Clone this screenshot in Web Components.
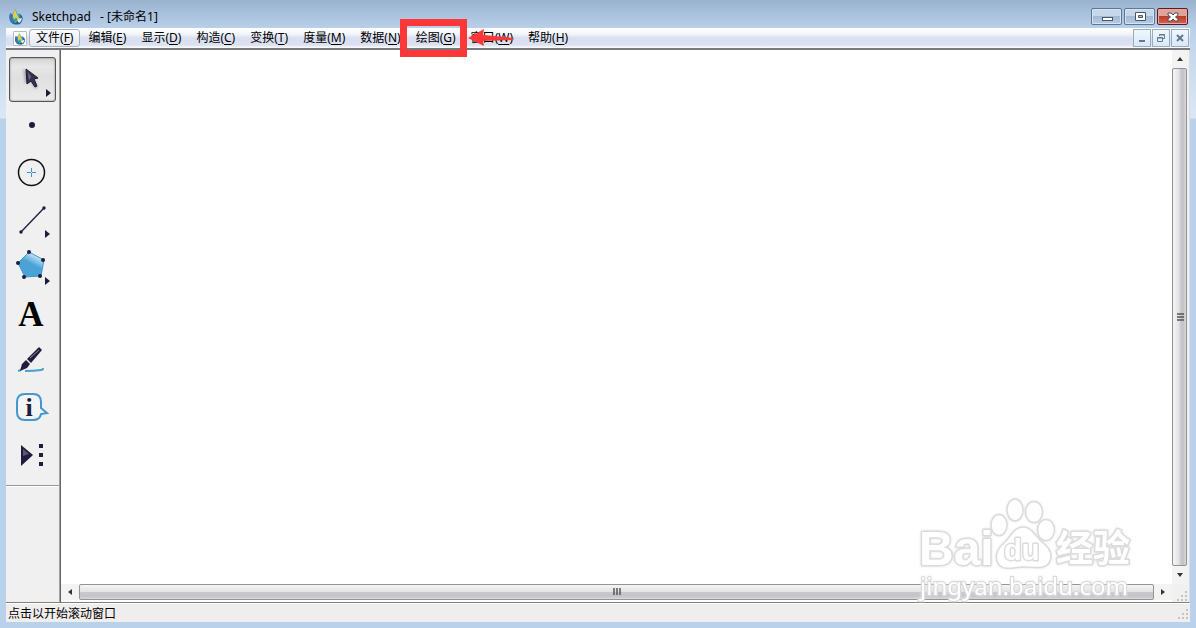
<!DOCTYPE html>
<html lang="zh-CN">
<head>
<meta charset="utf-8">
<title>Sketchpad - [未命名1]</title>
<style>
  html, body { margin: 0; height: 100%; overflow: hidden; }
  body { font: 12px/16px "Noto Sans", "Noto Sans CJK SC", sans-serif; color: #000; }
</style>
</head>
<body>
<app-window>
  <title-bar slot="title">Sketchpad&nbsp;&nbsp; - [未命名1]</title-bar>
  <menu-bar slot="menu">
    <menu-item key="F" hot>文件</menu-item>
    <menu-item key="E">编辑</menu-item>
    <menu-item key="D">显示</menu-item>
    <menu-item key="C">构造</menu-item>
    <menu-item key="T">变换</menu-item>
    <menu-item key="M">度量</menu-item>
    <menu-item key="N">数据</menu-item>
    <menu-item key="G" marked>绘图</menu-item>
    <menu-item key="W">窗口</menu-item>
    <menu-item key="H">帮助</menu-item>
  </menu-bar>
  <tool-palette slot="tools"></tool-palette>
  <sketch-view slot="view"></sketch-view>
  <status-bar slot="status">点击以开始滚动窗口</status-bar>
</app-window>

<script>
const define = (name, html, setup) => {
  const template = document.createElement('template');
  template.innerHTML = html;
  customElements.define(name, class extends HTMLElement {
    constructor() {
      super();
      this.attachShadow({ mode: 'open' }).append(template.content.cloneNode(true));
    }
    connectedCallback() { if (setup) setup(this, this.shadowRoot); }
  });
};

const drop = (id) => `
  <svg viewBox="0 0 16 16" aria-hidden="true">
    <defs><radialGradient id="${id}" cx=".4" cy=".4"><stop offset="0" stop-color="#8fe0f5"/><stop offset=".6" stop-color="#2d9fc9"/><stop offset="1" stop-color="#285f8e"/></radialGradient></defs>
    <path d="M2 5Q0 12 5 15Q9 16 12 15Q16 11 14 7Q12 4 10 5L7 0Q6 5 2 5Z" fill="url(#${id})"/>
    <path d="M7 0L9 6L12 10L10 11L8 8L6 10L5 7Z" fill="#f2cc32"/>
    <path d="M2 4Q0 10 4 14L6 15Q4 9 5 6Z" fill="#3f73a6"/>
    <path d="M9 11Q12 9 14 9Q14 12 11 14Z" fill="#d6f0ec"/>
    <path d="M6 13L9 11L8 14Z" fill="#79b84b"/>
  </svg>`;

define('app-window', `
  <style>
    :host { display: grid; grid-template: 28px 22px minmax(0, 1fr) 19px / auto minmax(0, 1fr);
      box-sizing: border-box; height: 100vh; padding: 0 6px 6px;
      background: linear-gradient(#99b2cf, #b9d0e9 28px, #c4d8ed 48px, #dbe7f5 118px, #b9d1ea 119px); }
    .title, .menu, .status { grid-column: 1 / -1; display: grid; }
    .tools, .view { display: grid; min-width: 0; min-height: 0; }
  </style>
  <div class="title"><slot name="title"></slot></div>
  <div class="menu"><slot name="menu"></slot></div>
  <div class="tools"><slot name="tools"></slot></div>
  <div class="view"><slot name="view"></slot></div>
  <div class="status"><slot name="status"></slot></div>`);

define('title-bar', `
  <style>
    :host { display: flex; align-items: center; padding: 5px 2px 0; min-width: 0; }
    svg { width: 16px; height: 16px; }
    .name { flex: 1; padding-left: 8px; white-space: nowrap; }
    .controls { display: flex; gap: 2px; }
    button { width: 31px; height: 17px; padding: 0; border: 1px solid #5c7898; border-radius: 2px; display: grid; place-items: center;
      background: linear-gradient(#c6d7e9 45%, #a2bad4 50%, #b6cce4); box-shadow: inset 0 0 0 1px #d5e3f2; }
    button svg { width: 14px; height: 12px; }
    .close { border-color: #5b1a26; background: linear-gradient(#e0a398 45%, #bd3a27 50%, #cd6750); box-shadow: inset 0 0 0 1px #e7aaa0; }
  </style>
  ${drop('globe')}
  <span class="name"><slot></slot></span>
  <div class="controls">
    <button aria-label="最小化"><svg viewBox="0 0 14 12"><rect x="2.5" y="6.5" width="10" height="3" fill="#fff" stroke="#4b5669"/></svg></button>
    <button aria-label="还原"><svg viewBox="0 0 14 12"><path d="M2.5 1.5h10v8h-10zM5.5 4.5v2h4v-2z" fill="#fff" fill-rule="evenodd" stroke="#4b5669"/></svg></button>
    <button class="close" aria-label="关闭"><svg viewBox="0 0 14 12"><path d="M2 2h3l2 2 2-2h3v2L9.5 6l2.5 2v2H9L7 8l-2 2H2V8l2.5-2L2 4z" fill="#fff" stroke="#4b4d5f"/></svg></button>
  </div>`);

define('menu-bar', `
  <style>
    :host { display: flex; align-items: center; box-sizing: border-box; padding: 0 1px 0 7px; border-bottom: 2px solid #77797c;
      background: linear-gradient(#fff, #f3f5fb 30%, #d9dff0 50%, #dbe1f1 85%, #fff); }
    .doc { width: 14px; height: 15px; box-sizing: border-box; padding: 1px 0; background: #fff; border: 1px solid #b6bdc9; border-radius: 1px; display: grid; }
    nav { display: flex; gap: 1px; flex: 1; padding-left: 2px; }
    .controls { display: flex; gap: 1px; }
    button { width: 18px; height: 18px; padding: 0; border: 1px solid #9aabbd; background: linear-gradient(#eff7fe, #d9e8f8); display: grid; place-items: center; }
    button svg { width: 12px; height: 12px; }
  </style>
  <span class="doc">${drop('page')}</span>
  <nav><slot></slot></nav>
  <div class="controls">
    <button aria-label="最小化文档"><svg viewBox="0 0 12 12"><path d="M3 8h6v2H3z" fill="#65788d"/></svg></button>
    <button aria-label="还原文档"><svg viewBox="0 0 12 12"><path d="M4.5 4V2.5h5v4H8M4 3h6M2.5 5.5h5v4h-5zM2 6h6" fill="none" stroke="#65788d"/></svg></button>
    <button aria-label="关闭文档"><svg viewBox="0 0 12 12"><path d="M3 3l6 6M9 3l-6 6" stroke="#65788d" stroke-width="2"/></svg></button>
  </div>`);

define('menu-item', `
  <style>
    :host { display: block; position: relative; }
    button { font: inherit; line-height: 16px; color: #000; padding: 0 6px; border: 1px solid transparent; border-radius: 3px; background: none; white-space: nowrap; display: block; }
    :host([hot]) button { border-color: #a9b1c0; background: linear-gradient(#fafbfd, #e4e8f3); }
    u { text-underline-offset: 2px; }
    .mark { display: none; }
    :host([marked]) { z-index: 1; }
    :host([marked]) .mark { display: block; position: absolute; pointer-events: none; }
    .frame { inset: -10px -4px -10px -9px; border: 7px solid #fb3737; }
    .arrow { left: calc(100% + 5px); top: 0; width: 46px; height: 18px; }
  </style>
  <button><slot></slot>(<u></u>)</button>
  <span class="mark frame"></span>
  <svg class="mark arrow" viewBox="0 0 46 18" aria-hidden="true"><path d="M0 9L16 0L15 6L46 9L45 11L15 12L16 17Z" fill="#fb3737"/></svg>`,
  (host, root) => { root.querySelector('u').textContent = host.getAttribute('key'); });

const tools = [
  ['选择箭头', `<defs><filter id="soft"><feGaussianBlur stdDeviation="1.2"/></filter></defs>
    <path d="M14 12l2 15 4-4 6 9 3-2-5-9h5z" fill="#888" opacity=".55" filter="url(#soft)"/>
    <path d="M17 12l1 15 4-3 4 6 2-1-3-7 4-1z" fill="#36334f" stroke="#1d1938"/><path d="M19 15l1 8 2-3z" fill="#736f8a"/><path d="M37 32v8l5-4z" fill="#201c3e"/>`],
  ['点工具', '<circle cx="23" cy="21" r="3" fill="#201c3e"/>'],
  ['圆工具', '<circle cx="22.5" cy="21.5" r="13" fill="none" stroke="#111" stroke-width="1.5"/><path d="M22.5 17v4M22.5 22v4M18 21.5h4M23 21.5h4" stroke="#3b94cc"/>'],
  ['线段工具', `<path d="M12 34L35 10" stroke="#201c3e" stroke-width="1.3"/><circle cx="12" cy="34" r="1.7" fill="#201c3e"/><circle cx="35" cy="10" r="1.7" fill="#201c3e"/><path d="M36 32v8l5-4z" fill="#201c3e"/>`],
  ['多边形工具', `<defs><linearGradient id="poly" x1=".8" y1=".05" x2=".55" y2=".5"><stop offset=".15" stop-color="#d3edfa"/><stop offset="1" stop-color="#4ba2d7"/></linearGradient></defs>
    <path d="M20 7L35 15L32 31L16 32L9 18Z" fill="url(#poly)" stroke="#3b9ad3"/><g fill="#201c3e"><circle cx="20" cy="7" r="2"/><circle cx="34" cy="15" r="2"/><circle cx="31" cy="31" r="2"/><circle cx="15" cy="32" r="2"/><circle cx="9" cy="18" r="2"/></g><path d="M36 32v8l5-4z" fill="#201c3e"/>`],
  ['文本工具', '<text x="22" y="34" text-anchor="middle" font-family="Liberation Serif, serif" font-weight="700" font-size="35">A</text>'],
  ['标记工具', `<path d="M16 32Q25 32 32 31Q34 31 34 29" fill="none" stroke="#4a9fd2" stroke-width="2"/><path d="M9 32l3-1" stroke="#4a9fd2" stroke-width="2"/>
    <path d="M18 20L30 8L33 11L22 24Z" fill="#201c3e"/><path d="M17 21L21 25L18 29L11 32L13 25Z" fill="#201c3e"/><path d="M21 19L30 11" stroke="#8f8da0"/>`],
  ['信息工具', `<path d="M16 8h8q8 0 8 8v6l6 5-6 1q-1 6-8 6h-8q-8 0-8-8V16q0-8 8-8z" fill="#f2f4f6" stroke="#4595cf" stroke-width="2"/>
    <text x="20" y="30" text-anchor="middle" font-family="Liberation Serif, serif" font-weight="700" font-size="26" fill="#201c3e">i</text>`],
  ['自定义工具', `<path d="M12 12v21l12-11z" fill="#201c3e"/><path d="M14 16v7l6-2z" fill="#5b5870"/><path d="M30 11h4v4h-4zM30 20h4v4h-4zM30 29h4v4h-4z" fill="#201c3e"/>`]
];

define('tool-button', `
  <style>
    :host { display: block; }
    button { display: block; box-sizing: border-box; width: 47px; height: 45px; padding: 0; border: 1px solid transparent; border-radius: 3px; background: none; }
    :host([pressed]) button { border-color: #555; background: linear-gradient(#d5d5d5, #e7e7e7 20%, #e0e0e0 45%, #eaeaea); box-shadow: inset 0 0 2px #777; }
    svg { display: block; width: 45px; height: 43px; }
  </style>
  <button><svg viewBox="1 1 45 43" aria-hidden="true"></svg></button>`,
  (host, root) => {
    const [label, art] = tools[Number(host.getAttribute('tool'))];
    root.querySelector('button').setAttribute('aria-label', label);
    root.querySelector('svg').innerHTML = art;
  });

define('tool-palette', `
  <style>
    :host { display: block; box-sizing: border-box; width: 54px; background: #f0f0f0; border-right: 1px solid #a0a0a0; border-bottom: 1px solid #808080; }
    .group { display: grid; gap: 2px; padding: 7px 3px; border-bottom: 1px solid #969696; box-shadow: 0 1px #fff; }
  </style>
  <div class="group">${tools.map((t, i) => `<tool-button tool="${i}"${i ? '' : ' pressed'}></tool-button>`).join('')}</div>`);

define('scroll-bar', `
  <style>
    :host { display: flex; background: #f0f0f0; min-width: 0; min-height: 0; }
    :host([vertical]) { flex-direction: column; }
    button { flex: none; padding: 0; border: 0; background: #f3f3f3; width: 18px; height: 16px; display: grid; place-items: center; }
    .thumb { flex: 1; box-sizing: border-box; border: 1px solid #929297; border-radius: 2px; display: grid; place-items: center;
      background: linear-gradient(#f5f5f5, #e3e3e5 48%, #c9c9cd 52%, #c4c4c8 80%, #dadadd); }
    :host([vertical]) .thumb { margin: 0 2px 0 0; background: linear-gradient(90deg, #f5f5f5, #e3e3e5 45%, #c9c9cd 60%, #c4c4c8 80%, #dadadd); }
    :host([vertical]) button { width: 16px; height: 18px; }
    svg { width: 8px; height: 8px; display: block; }
    :host([vertical]) svg { transform: rotate(90deg); }
  </style>
  <button aria-label="后退"><svg viewBox="0 0 8 8"><path d="M6 1v6L2 4z" fill="#333"/></svg></button>
  <div class="thumb"><svg viewBox="0 0 8 8"><path d="M1 0v7M4 0v7M7 0v7" stroke="#555" stroke-width="1.5"/></svg></div>
  <button aria-label="前进"><svg viewBox="0 0 8 8"><path d="M2 1v6l4-3z" fill="#333"/></svg></button>`);

define('size-grip', `
  <style>:host { display: grid; place-items: end; background: #f0f0f0; } svg { width: 12px; height: 12px; }</style>
  <svg viewBox="0 0 12 12" aria-hidden="true"><path d="M8 1h2v2H8zM8 5h2v2H8zM4 5h2v2H4zM8 9h2v2H8zM4 9h2v2H4zM0 9h2v2H0z" fill="#c4c4c4"/></svg>`);

define('water-mark', `
  <style>
    :host { display: block; pointer-events: none; }
    svg { display: block; width: 222px; height: 110px; overflow: visible; filter: drop-shadow(0 0 1px #e2e2e2); }
    text { paint-order: stroke; }
  </style>
  <svg viewBox="0 0 222 110">
    <g fill="#fff" stroke="#dcdcdc" stroke-width="1.5" stroke-linejoin="round">
      <g font-family="Liberation Sans, sans-serif" font-weight="700" stroke-width="3">
        <text x="2" y="70" font-size="48">Bai</text>
        <text x="139" y="67" font-size="37" font-family="Noto Sans CJK SC, sans-serif">经验</text>
      </g>
      <ellipse cx="82" cy="30" rx="8" ry="10.5"/><ellipse cx="98" cy="15" rx="8" ry="11"/><ellipse cx="117" cy="17" rx="8.5" ry="10.5"/><ellipse cx="129" cy="35" rx="8.5" ry="10.5"/>
      <path d="M106 32C115 32 118 41 125 47C134 54 136 61 132 68C127 75 117 72 106 72C97 72 88 76 82 70C76 61 81 53 88 47C94 41 97 32 106 32Z"/>
      <text x="87" y="65" font-family="Liberation Sans, sans-serif" font-weight="700" font-size="29" stroke-width="3">du</text>
    </g>
    <text x="3" y="100" font-family="Noto Sans, sans-serif" font-size="24" fill="#fff" stroke="#d8d8d8" stroke-width="2">jingyan.baidu.com</text>
  </svg>`);

define('sketch-view', `
  <style>
    :host { display: grid; position: relative; grid-template: minmax(0, 1fr) 18px / minmax(0, 1fr) 17px; border-left: 1px solid #666; border-right: 1px solid #ddd; border-bottom: 1px solid #808080; background: #fff; min-width: 0; min-height: 0; }
    scroll-bar:not([vertical]) { margin-bottom: 2px; }
    water-mark { position: absolute; right: 50px; bottom: -3px; z-index: 1; }
  </style>
  <main aria-label="画板"></main>
  <scroll-bar vertical></scroll-bar>
  <scroll-bar></scroll-bar>
  <size-grip></size-grip>
  <water-mark></water-mark>`);

define('status-bar', `
  <style>
    :host { display: flex; align-items: center; justify-content: space-between; padding: 2px 0 0 2px; box-sizing: border-box; border-top: 1px solid #fff; background: #f0eded; }
    size-grip { background: none; }
  </style>
  <span><slot></slot></span><size-grip></size-grip>`);
</script>
</body>
</html>
